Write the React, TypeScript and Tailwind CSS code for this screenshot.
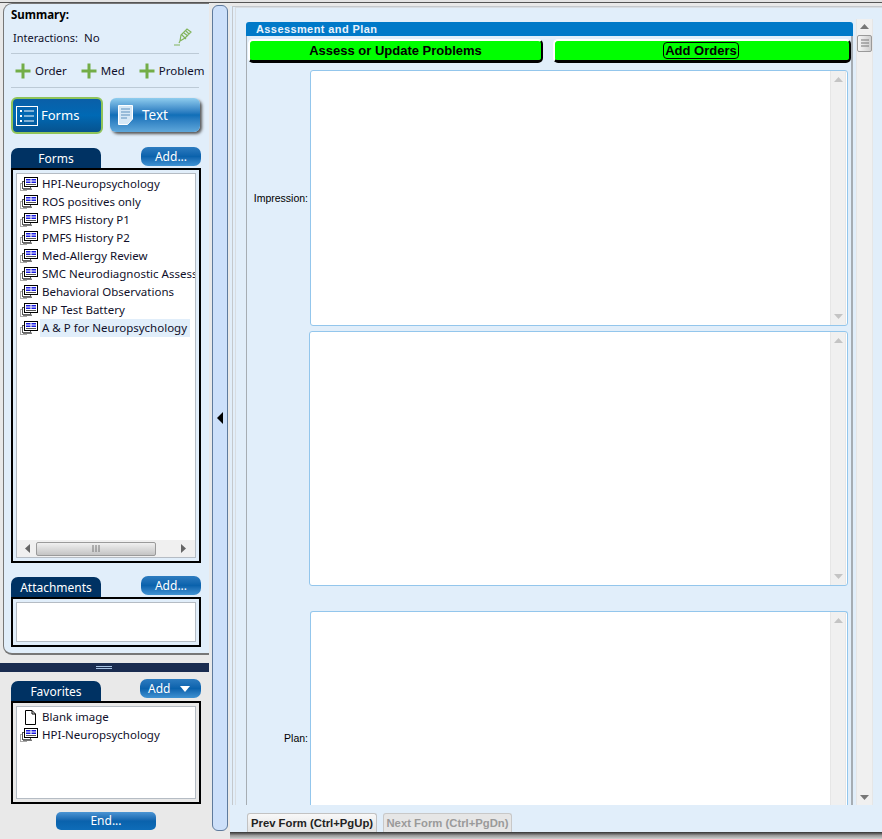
import React from "react";

const FormIcon = () => (
  <svg width="18" height="15" viewBox="0 0 18 15" className="shrink-0">
    <rect x="0.5" y="6.5" width="6" height="7" fill="none" stroke="#a8a8a8" />
    <rect x="2.5" y="4.5" width="8" height="7" fill="#fff" stroke="#555" />
    <rect x="4.5" y="0.5" width="13" height="9" fill="#fff" stroke="#000" />
    <rect x="6" y="2" width="4.5" height="1.5" fill="#1a1ae0" />
    <rect x="11.5" y="2" width="4.5" height="1.5" fill="#1a1ae0" />
    <rect x="6" y="4.5" width="4.5" height="1.5" fill="#1a1ae0" />
    <rect x="11.5" y="4.5" width="4.5" height="1.5" fill="#1a1ae0" />
    <rect x="6" y="7" width="10" height="1" fill="#555" />
    <rect x="3" y="11.5" width="9" height="1.5" fill="#777" />
  </svg>
);

const BlankIcon = () => (
  <svg width="18" height="15" viewBox="0 0 18 15" className="shrink-0">
    <path d="M5.5 .5H12L15.5 4V14.5H5.5Z M12 .5V4H15.5" fill="#fff" stroke="#000" />
  </svg>
);

const Plus = () => (
  <svg width="16" height="16" viewBox="0 0 16 16" className="shrink-0">
    <path d="M6.5 0.5h3v6h6v3h-6v6h-3v-6h-6v-3h6z" fill="#73ad47" />
  </svg>
);

const Row = ({ label, sel, blank }: { label: string; sel?: boolean; blank?: boolean }) => (
  <div className="flex h-[18px] items-center pl-[3px]">
    {blank ? <BlankIcon /> : <FormIcon />}
    <span className={`ml-[2px] flex h-[18px] shrink-0 items-center pl-[2px] pr-[2px] whitespace-nowrap ${sel ? "w-[150px] bg-[#e1eefa]" : ""}`}>{label}</span>
  </div>
);

const SmallBtn = ({ w, children, extra = "justify-center" }: { w: string; children: React.ReactNode; extra?: string }) => (
  <div className={`flex h-[19px] ${w} ${extra} items-center rounded-[7px] bg-gradient-to-b from-[#2c7cc0] via-[#0a62ac] to-[#3f92d2] pt-[1px] text-[12px] text-white`}>
    {children}
  </div>
);

const Tab = ({ children }: { children: React.ReactNode }) => (
  <div className="flex h-[20px] w-[90px] items-center justify-center rounded-t-[7px] bg-[#003263] pt-[2px] text-[12px] text-white">{children}</div>
);

const TabHead = ({ label, btn, btnW, mt, mb = "mb-[2px]", extra }: { label: string; btn: React.ReactNode; btnW: string; mt: string; mb?: string; extra?: string }) => (
  <div className={`flex items-end justify-between ${mt}`}>
    <Tab>{label}</Tab>
    <div className={mb}><SmallBtn w={btnW} extra={extra}>{btn}</SmallBtn></div>
  </div>
);

const VScroll = () => (
  <div className="flex w-[16px] shrink-0 flex-col items-center justify-between self-stretch border-x border-[#e6e6e6] bg-[#f0f0f0] py-[6px]">
    <svg width="9" height="5" viewBox="0 0 9 5"><path d="M4.5 0L9 5H0Z" fill="#c4c4c4" /></svg>
    <svg width="9" height="5" viewBox="0 0 9 5"><path d="M4.5 5L9 0H0Z" fill="#c4c4c4" /></svg>
  </div>
);

const TextBox = ({ h, ml }: { h: string; ml: string }) => (
  <div className={`flex ${h} ${ml} flex-1 rounded-[3px] border border-[#93c6ec] bg-white pr-[1px]`}>
    <div className="flex-1" />
    <VScroll />
  </div>
);

const FieldLabel = ({ children, h = "" }: { children: React.ReactNode; h?: string }) => (
  <div className={`flex w-[62px] shrink-0 items-center justify-end pr-[1px] pt-[2px] text-[10.5px] text-black ${h}`} style={{ fontFamily: "'Liberation Sans', sans-serif" }}>
    {children}
  </div>
);

export default function App() {
  return (
    <div className="flex h-[839px] w-[882px] flex-col overflow-hidden bg-[#e9e9e9] text-[11.5px] text-[#10102a]" style={{ fontFamily: "'Noto Sans', sans-serif" }}>
      <div className="h-[2px] shrink-0 bg-[#e4e4e4]" />
      <div className="h-[1px] shrink-0 bg-[#555]" />
      <div className="flex min-h-0 flex-1">
        {/* left column */}
        <div className="flex w-[209px] shrink-0 flex-col">
          <div className="ml-[3px] h-[652px] w-[206px] shrink-0 rounded-bl-[9px] rounded-tl-[9px] border-b-2 border-l border-t border-[#777] bg-[#e1eefa] pl-[7px] pr-[8px]">
            <div className="mt-[3px] leading-[16px] font-bold text-black">Summary:</div>
            <div className="mt-[6px] flex h-[18px] items-center pl-[2px] text-[11px]">
              <span>Interactions:</span>
              <span className="ml-[6px] text-[11.5px]">No</span>
              <svg width="20" height="20" viewBox="0 0 20 20" className="ml-auto mr-[8px]">
                <path d="M7 13l1-6 6-6 4 3-6 6zM9 7l4 4M11 5l4 3M13 3l3 3M7 13l-1 2M1 17h6" fill="none" stroke="#82b45c" strokeWidth="1.2" />
              </svg>
            </div>
            <div className="mr-[2px] mt-[6px] h-[1px] bg-[#bccad6]" />
            <div className="flex h-[33px] items-center pl-[4px] whitespace-nowrap">
              <Plus /><span className="ml-[4px]">Order</span>
              <span className="ml-[14px]"><Plus /></span><span className="ml-[4px]">Med</span>
              <span className="ml-[14px]"><Plus /></span><span className="ml-[4px]">Problem</span>
            </div>
            <div className="mr-[2px] h-[1px] bg-[#bccad6]" />
            <div className="mt-[9px] flex h-[37px]">
              <div className="flex h-[37px] w-[92px] items-center rounded-[6px] border-2 border-[#8fc45a] bg-gradient-to-b from-[#0a5fa8] via-[#0069b4] to-[#06538f] pl-[3px] text-[13px] text-white">
                <svg width="22" height="20" viewBox="0 0 22 20">
                  <rect x="0.5" y="0.5" width="21" height="19" fill="none" stroke="#fff" />
                  <path d="M4 5h2M4 10h2M4 15h2" stroke="#fff" strokeWidth="2" />
                  <path d="M8 5h10M8 10h10M8 15h10" stroke="#fff" />
                </svg>
                <span className="ml-[3px]">Forms</span>
              </div>
              <div className="ml-[7px] mt-[1px] flex h-[34px] w-[90px] items-center rounded-[6px] bg-gradient-to-b from-[#8fcdee] via-[#0f6fb8] to-[#5ea7da] pl-[8px] text-[13.5px] text-white shadow-[2px_2px_3px_#555]">
                <svg width="15" height="20" viewBox="0 0 15 20">
                  <path d="M.5 .5H14.5V14L9.5 19.5H.5Z" fill="#d6e8f6" stroke="#fff" />
                  <path d="M3 4h9M3 7h9M3 10h9M3 13h6" stroke="#5a8fbc" />
                </svg>
                <span className="ml-[9px]">Text</span>
              </div>
            </div>
            <TabHead label="Forms" btn="Add..." btnW="w-[60px]" mt="mt-[13px]" />
            <div className="h-[395px] border-2 border-black p-[3px]">
              <div className="flex h-full flex-col border border-[#b5bcc4] bg-white">
                <div className="flex-1 overflow-hidden pt-[1px]">
                  <Row label="HPI-Neuropsychology" />
                  <Row label="ROS positives only" />
                  <Row label="PMFS History P1" />
                  <Row label="PMFS History P2" />
                  <Row label="Med-Allergy Review" />
                  <Row label="SMC Neurodiagnostic Assess" />
                  <Row label="Behavioral Observations" />
                  <Row label="NP Test Battery" />
                  <Row label="A & P for Neuropsychology" sel />
                </div>
                <div className="flex h-[17px] items-center bg-[#f0f0f0] pl-[8px] pr-[9px]">
                  <svg width="5" height="9" viewBox="0 0 5 9"><path d="M0 4.5L5 0V9Z" fill="#666" /></svg>
                  <div className="ml-[6px] flex h-[14px] w-[120px] items-center justify-center rounded-[2px] border border-[#9a9a9a] bg-gradient-to-b from-[#f0f0f0] to-[#c4c4c4]">
                    <svg width="9" height="7" viewBox="0 0 9 7"><path d="M1 0v7M4 0v7M7 0v7" stroke="#777" /></svg>
                  </div>
                  <svg width="5" height="9" viewBox="0 0 5 9" className="ml-auto"><path d="M5 4.5L0 0V9Z" fill="#666" /></svg>
                </div>
              </div>
            </div>
            <TabHead label="Attachments" btn="Add..." btnW="w-[60px]" mt="mt-[13px]" />
            <div className="h-[50px] border-2 border-black p-[3px]">
              <div className="h-full border border-[#b5bcc4] bg-white" />
            </div>
          </div>
          <div className="mt-[8px] flex h-[9px] shrink-0 items-center justify-center bg-[#1a2c50]">
            <div className="mr-[2px] h-[3px] w-[16px] border-y border-[#a8c4e4]" />
          </div>
          <div className="pl-[11px] pr-[8px]">
            <TabHead
              label="Favorites"
              btn={<><span>Add</span><svg width="10" height="6" viewBox="0 0 10 6" className="ml-[10px]"><path d="M0 0H10L5 6Z" fill="#fff" /></svg></>}
              btnW="w-[61px]"
              extra="justify-start pl-[8px]"
              mt="mt-[7px]"
              mb="mb-[3px]"
            />
            <div className="h-[103px] w-[190px] border-2 border-black p-[3px]">
              <div className="h-full border border-[#b5bcc4] bg-white pt-[1px]">
                <Row label="Blank image" blank />
                <Row label="HPI-Neuropsychology" />
              </div>
            </div>
            <div className="mt-[8px] flex justify-center">
              <div className="flex h-[18px] w-[100px] items-center justify-center rounded-[5px] bg-gradient-to-b from-[#4b95d4] via-[#0a62ac] to-[#0e6cb8] text-[12px] text-white">End...</div>
            </div>
          </div>
        </div>

        {/* collapse strip */}
        <div className="ml-[3px] mb-[8px] mt-[2px] flex w-[16px] shrink-0 items-center justify-center rounded-[6px] border border-[#5f7a9c] bg-[#cde0fa]">
          <svg width="6" height="12" viewBox="0 0 6 12"><path d="M6 0V12L0 6Z" fill="#000" /></svg>
        </div>

        {/* right column */}
        <div className="ml-[2px] mt-[3px] flex min-w-0 flex-1 flex-col">
          <div className="flex h-[826px] flex-col bg-[#e1eefa]">
            <div className="ml-[2px] flex min-h-0 flex-1 border-l border-t border-[#c4c8cc]">
              <div className="ml-[2px] flex min-w-0 flex-1 border-l border-t border-[#d8dde2]">
                <div className="ml-[10px] mt-[14px] flex w-[607px] flex-col">
                  <div className="flex h-[14px] shrink-0 items-center rounded-t-[3px] bg-[#0079c8] pl-[10px] text-[11px] font-bold tracking-[0.4px] text-[#e8f2fb]" style={{ fontFamily: "'Liberation Sans', sans-serif" }}>
                    Assessment and Plan
                  </div>
                  <div className="flex min-h-0 flex-1 flex-col overflow-hidden border-l border-r-2 border-[#a6adb3]">
                    <div className="mt-[3px] flex gap-[10px] pl-[1px] text-[13px] font-bold text-black" style={{ fontFamily: "'Liberation Sans', sans-serif" }}>
                      <div className="flex h-[24px] w-[295px] items-center justify-center rounded-[5px] border-2 border-b-[3px] border-l-white border-r-black border-t-white border-b-black bg-[#00ff00]">Assess or Update Problems</div>
                      <div className="flex h-[24px] flex-1 items-center justify-center rounded-[5px] border-2 border-b-[3px] border-l-white border-r-black border-t-white border-b-black bg-[#00ff00] pr-[2px]">
                        <span className="rounded-[4px] border border-black px-[1px] leading-[15px]">Add Orders</span>
                      </div>
                    </div>
                    <div className="mt-[7px] flex h-[256px] shrink-0 pr-[3px]">
                      <FieldLabel>Impression:</FieldLabel>
                      <TextBox h="h-[256px]" ml="ml-[1px]" />
                    </div>
                    <div className="mt-[5px] flex h-[255px] shrink-0 pr-[3px]">
                      <div className="w-[62px] shrink-0" />
                      <TextBox h="h-[255px]" ml="ml-0" />
                    </div>
                    <div className="mt-[25px] flex min-h-0 flex-1 items-start pr-[3px]">
                      <FieldLabel h="h-[254px]">Plan:</FieldLabel>
                      <div className="ml-[1px] flex h-full flex-1 rounded-t-[3px] border-x border-t border-[#93c6ec] bg-white pr-[1px]">
                        <div className="flex-1" />
                        <div className="flex w-[16px] justify-center self-stretch border-x border-[#e6e6e6] bg-[#f0f0f0] pt-[6px]">
                          <svg width="9" height="5" viewBox="0 0 9 5"><path d="M4.5 0L9 5H0Z" fill="#c4c4c4" /></svg>
                        </div>
                      </div>
                    </div>
                  </div>
                </div>
                <div className="ml-[3px] mt-[11px] flex w-[17px] flex-col">
                  <div className="relative flex flex-1 flex-col items-center justify-between border-x border-[#e6e6e6] bg-[#f0f0f0] py-[5px]">
                    <svg width="9" height="5" viewBox="0 0 9 5"><path d="M4.5 0L9 5H0Z" fill="#777" /></svg>
                    <svg width="9" height="5" viewBox="0 0 9 5"><path d="M4.5 5L9 0H0Z" fill="#777" /></svg>
                    <div className="absolute left-0 top-[16px] flex h-[17px] w-[15px] items-center justify-center rounded-[2px] border border-[#9a9a9a] bg-gradient-to-r from-[#f6f6f6] to-[#cfcfcf]">
                      <svg width="8" height="9" viewBox="0 0 8 9"><path d="M0 1h8M0 4h8M0 7h8" stroke="#777" /></svg>
                    </div>
                  </div>
                </div>
              </div>
            </div>
            <div className="ml-[17px] flex h-[27px] shrink-0 items-end gap-[6px] text-[11.3px] font-bold" style={{ fontFamily: "'Liberation Sans', sans-serif" }}>
              <div className="flex h-[19px] w-[130px] items-center justify-center rounded-t-[3px] border border-b-0 border-[#c2c2c2] bg-gradient-to-b from-[#f8f8f8] to-[#e2e2e2] text-[#222]">Prev Form (Ctrl+PgUp)</div>
              <div className="flex h-[19px] w-[129px] items-center justify-center rounded-t-[3px] border border-b-0 border-[#c8c8c8] bg-[#e6e6e6] text-[#9a9a9a]">Next Form (Ctrl+PgDn)</div>
            </div>
          </div>
          <div className="h-[7px] shrink-0 bg-gradient-to-b from-[#333] via-[#9a9a9a] to-[#d0d0d0]" />
        </div>
      </div>
    </div>
  );
}
